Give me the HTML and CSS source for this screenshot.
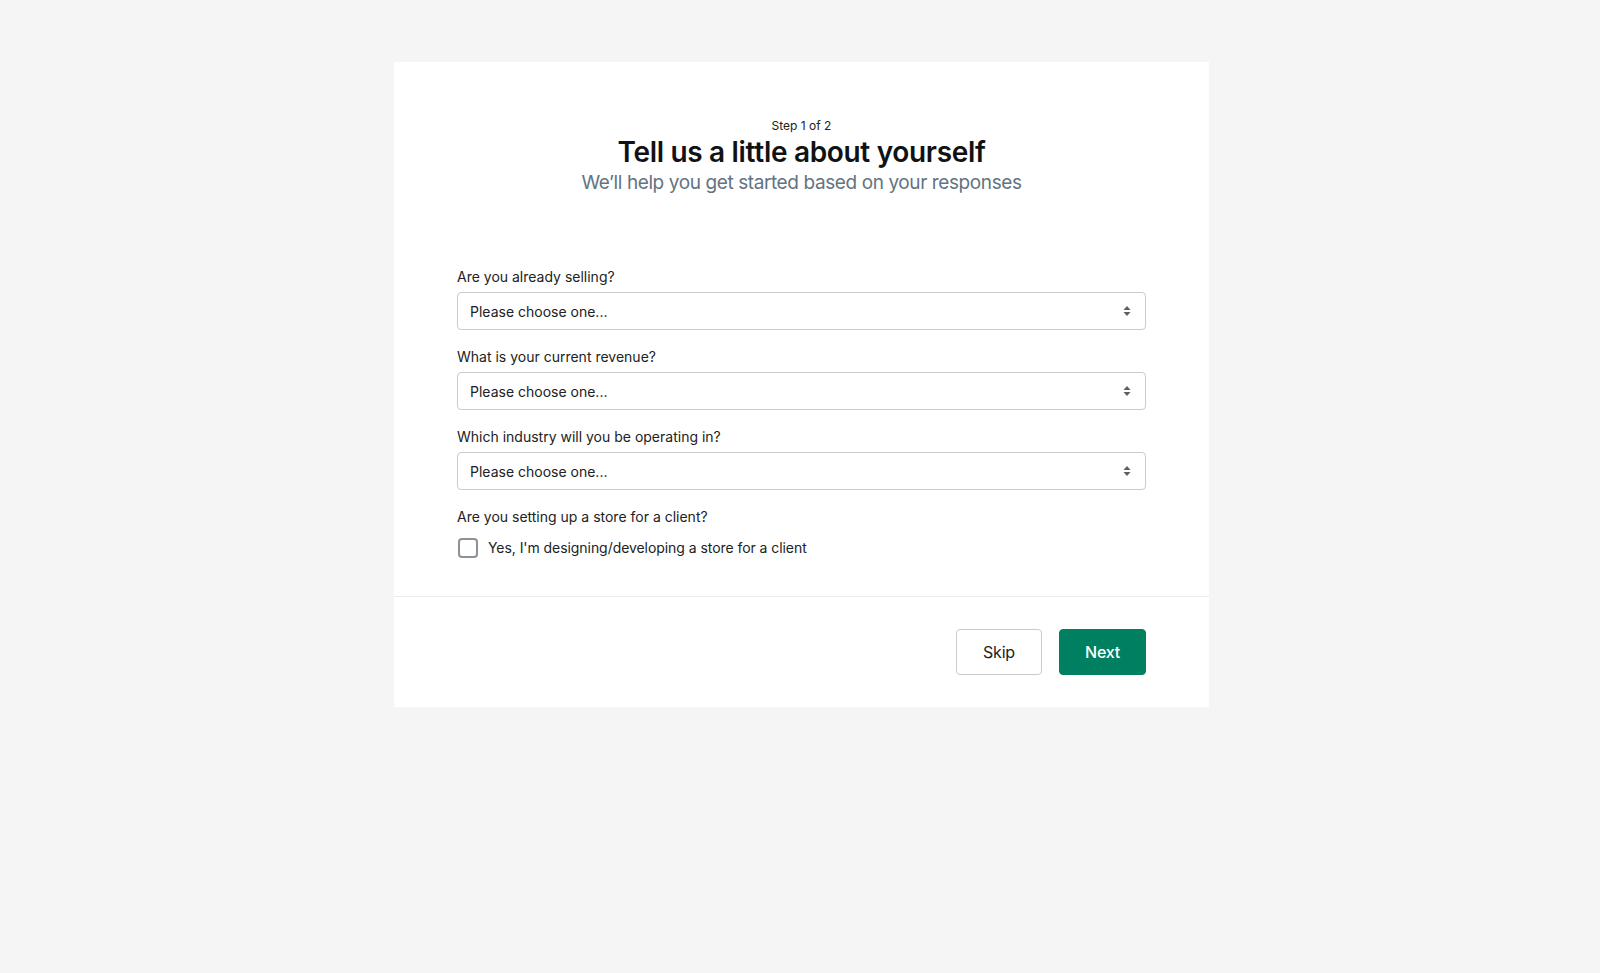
FILE: index.html
```html
<!DOCTYPE html>
<html lang="en">
<head>
<meta charset="utf-8">
<title>Tell us a little about yourself</title>
<link rel="stylesheet" href="styles.css">
</head>
<body>
<main class="page">
  <section class="card">
    <header class="card-header">
      <p class="step">Step 1 of 2</p>
      <h1 class="title">Tell us a little about yourself</h1>
      <p class="subtitle">We’ll help you get started based on your responses</p>
    </header>
    <form class="card-body">
      <div class="field">
        <label class="label">Are you already selling?</label>
        <div class="select">
          <span class="select-text">Please choose one...</span>
          <svg class="chevrons" width="10" height="14" viewBox="0 0 10 14"><path d="M5 2 L8.5 6 H1.5 Z M5 12 L8.5 8 H1.5 Z" fill="#5c5f62"/></svg>
        </div>
      </div>
      <div class="field">
        <label class="label">What is your current revenue?</label>
        <div class="select">
          <span class="select-text">Please choose one...</span>
          <svg class="chevrons" width="10" height="14" viewBox="0 0 10 14"><path d="M5 2 L8.5 6 H1.5 Z M5 12 L8.5 8 H1.5 Z" fill="#5c5f62"/></svg>
        </div>
      </div>
      <div class="field">
        <label class="label">Which industry will you be operating in?</label>
        <div class="select">
          <span class="select-text">Please choose one...</span>
          <svg class="chevrons" width="10" height="14" viewBox="0 0 10 14"><path d="M5 2 L8.5 6 H1.5 Z M5 12 L8.5 8 H1.5 Z" fill="#5c5f62"/></svg>
        </div>
      </div>
      <div class="field field-last">
        <label class="label">Are you setting up a store for a client?</label>
        <div class="check-row">
          <span class="checkbox"></span>
          <span class="check-text">Yes, I'm designing/developing a store for a client</span>
        </div>
      </div>
    </form>
    <footer class="card-footer">
      <button class="btn btn-secondary" type="button">Skip</button>
      <button class="btn btn-primary" type="button">Next</button>
    </footer>
  </section>
</main>
</body>
</html>
```
FILE: styles.css
```css
* { box-sizing: border-box; }
html, body {
  margin: 0;
  padding: 0;
  background: #f5f5f5;
  font-family: "Inter", "Roboto", "Liberation Sans", sans-serif;
  color: #202223;
}
.page {
  display: flex;
  justify-content: center;
  align-items: flex-start;
  padding-top: 62px;
  padding-left: 3px;
  min-height: 973px;
}
.card {
  width: 815px;
  background: #ffffff;
  display: flex;
  flex-direction: column;
}
.card-header {
  display: flex;
  flex-direction: column;
  align-items: center;
  padding-top: 56px;
}
.step {
  margin: 0;
  font-size: 12px;
  line-height: 16px;
  color: #202223;
}
.title {
  margin: 1px 0 0;
  font-size: 28px;
  line-height: 34px;
  font-weight: 600;
  letter-spacing: -0.32px;
  color: #111213;
}
.subtitle {
  margin: 2px 0 0;
  font-size: 19px;
  line-height: 24px;
  font-weight: 400;
  letter-spacing: -0.4px;
  color: #637381;
}
.card-body {
  display: flex;
  flex-direction: column;
  padding: 72px 63px 38px;
}
.field {
  display: flex;
  flex-direction: column;
  gap: 5px;
  margin-bottom: 17px;
}
.field-last { margin-bottom: 0; gap: 0; }
.label {
  font-size: 14px;
  line-height: 20px;
  color: #202223;
}
.select {
  height: 38px;
  border: 1px solid #c9cccf;
  border-radius: 4px;
  display: flex;
  align-items: center;
  justify-content: space-between;
  padding: 0 13px 0 12px;
  background: #fff;
}
.select-text {
  font-size: 14px;
  color: #202223;
}
.chevrons { display: block; }
.check-row {
  display: flex;
  align-items: center;
  gap: 10px;
  margin-top: 11px;
  height: 20px;
}
.checkbox {
  width: 20px;
  height: 20px;
  margin-left: 1px;
  border: 2px solid #8c9196;
  border-radius: 4px;
  background: #fff;
}
.check-text {
  font-size: 14px;
  line-height: 20px;
  letter-spacing: -0.06px;
  color: #202223;
}
.card-footer {
  border-top: 1px solid #ebebeb;
  display: flex;
  justify-content: flex-end;
  gap: 17px;
  padding: 32px 63px 32px;
}
.btn {
  height: 46px;
  border-radius: 4px;
  font-family: inherit;
  font-size: 16px;
  letter-spacing: -0.2px;
  cursor: pointer;
}
.btn-secondary {
  width: 86px;
  background: #fff;
  border: 1px solid #c9cccf;
  color: #202223;
  font-weight: 400;
}
.btn-primary {
  width: 87px;
  background: #008060;
  border: 1px solid #008060;
  color: #fff;
  font-weight: 500;
}
```
